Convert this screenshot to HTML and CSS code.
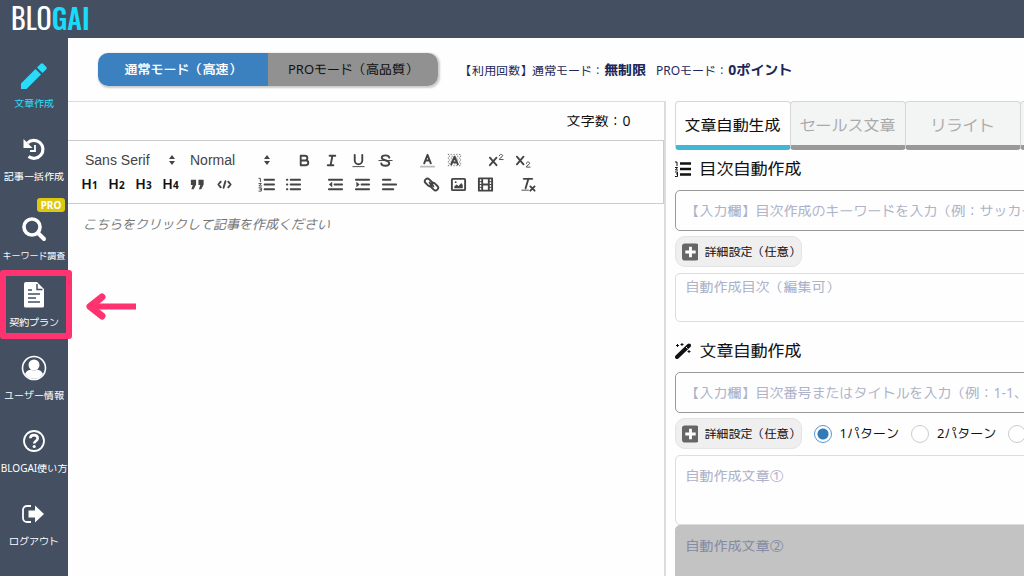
FILE: index.html
```html
<!DOCTYPE html>
<html lang="ja">
<head>
<meta charset="utf-8">
<title>BLOGAI</title>
<link rel="stylesheet" href="styles.css">
</head>
<body>
<header class="topbar"><a class="logo" href="#">BLO<span class="logo-accent">GAI</span></a></header>
<div class="shell">
  <nav class="sidebar">
    <a class="nav-item active" href="#">
      <svg class="nav-icon" viewBox="0 0 28 28" fill="currentColor"><path d="M1 21.500V27h5.500L21 12.500 15.500 7zM17 5.500l5.500 5.500 3.800-3.800a1.600 1.600 0 0 0 0-2.200L23 1.700a1.600 1.600 0 0 0-2.200 0z"/></svg>
      <span>文章作成</span>
    </a>
    <a class="nav-item" href="#">
      <svg class="nav-icon" viewBox="0 0 28 28" fill="none" stroke="currentColor"><path d="M7.500 8a9 9 0 1 1 1 13.500" stroke-width="3.200"/><path d="M3.500 4v9h9z" fill="currentColor" stroke="none"/><path d="M15 10v6h-5" stroke-width="1.800"/></svg>
      <span>記事一括作成</span>
    </a>
    <a class="nav-item has-badge" href="#">
      <span class="badge">PRO</span>
      <svg class="nav-icon" viewBox="0 0 28 28" fill="none" stroke="currentColor"><circle cx="12" cy="12" r="8" stroke-width="3.600"/><path d="M18 18l6 6" stroke-width="4" stroke-linecap="round"/></svg>
      <span class="long">キーワード調査</span>
    </a>
    <a class="nav-item marked" href="#">
      <svg class="nav-icon" viewBox="0 0 28 28"><path d="M6 1h11l7 7v17a1.500 1.500 0 0 1-1.500 1.500h-17A1.500 1.500 0 0 1 4 25V3a2 2 0 0 1 2-2z" fill="currentColor"/><path d="M17 3v5.500h5.500M8 9h4M8 13h12M8 17h8M8 21h12" fill="none" stroke="#445062" stroke-width="1.500"/></svg>
      <span>契約プラン</span>
      <span class="highlight"></span>
      <svg class="arrow" viewBox="0 0 52 30" fill="none" stroke="#ff3370" stroke-width="6"><path d="M5 14.500h46"/><path d="M17 5L5 14.500l12 9.500" stroke-width="7" stroke-linecap="round" stroke-linejoin="round"/></svg>
    </a>
    <a class="nav-item" href="#">
      <svg class="nav-icon" viewBox="0 0 28 28"><circle cx="14" cy="14" r="11.500" fill="none" stroke="currentColor" stroke-width="1.600"/><circle cx="14" cy="11" r="5.500" fill="currentColor"/><path d="M5 20c1.500-3.500 4-4.500 6-4.300 2 1 4 1 6 0 2-.2 4.500.8 6 4.300a11 11 0 0 1-18 0z" fill="currentColor"/></svg>
      <span>ユーザー情報</span>
    </a>
    <a class="nav-item" href="#">
      <svg class="nav-icon" viewBox="0 0 28 28" fill="none" stroke="currentColor"><circle cx="14" cy="14" r="10" stroke-width="1.800"/><path d="M10.300 11.300c.2-4.300 7.400-4.300 7.400 0 0 2.700-3.500 2.600-3.500 5.200" stroke-width="2.600"/><circle cx="14.200" cy="19.500" r="1.600" fill="currentColor" stroke="none"/></svg>
      <span>BLOGAI使い方</span>
    </a>
    <a class="nav-item" href="#">
      <svg class="nav-icon" viewBox="0 0 28 28"><path d="M11 6H7a4 4 0 0 0-4 4v8a4 4 0 0 0 4 4h4" fill="none" stroke="currentColor" stroke-width="1.800"/><path d="M8.500 10.500H15V5.500L24 14l-9 8.500v-5H8.500z" fill="currentColor"/></svg>
      <span>ログアウト</span>
    </a>
  </nav>
  <main class="main">
    <div class="mode-row">
      <div class="mode-toggle">
        <button class="mode on" type="button">通常モード（高速）</button>
        <button class="mode" type="button">PROモード（高品質）</button>
      </div>
      <p class="usage"><span>【利用回数】通常モード：<b>無制限</b></span><span>PROモード：<b>0ポイント</b></span></p>
    </div>
    <div class="columns">
      <section class="editor">
        <div class="count">文字数：<span>0</span></div>
        <div class="toolbar">
          <div class="tool-row">
            <div class="group">
              <div class="picker wide"><select aria-label="フォント"><option>Sans Serif</option></select><svg viewBox="0 0 8 12"><path d="M4 1l3 4H1zM4 11L1 7h6z"/></svg></div>
              <div class="picker"><select aria-label="サイズ"><option>Normal</option></select><svg viewBox="0 0 8 12"><path d="M4 1l3 4H1zM4 11L1 7h6z"/></svg></div>
            </div>
            <div class="group">
              <button type="button" aria-label="太字"><svg viewBox="0 0 18 18"><path d="M5 4h4.500a2.500 2.500 0 0 1 0 5H5zM5 9h5.500a2.500 2.500 0 0 1 0 5H5z"/></svg></button>
              <button type="button" aria-label="斜体"><svg viewBox="0 0 18 18"><path d="M7 4h6M5 14h6M8 14l2-10"/></svg></button>
              <button type="button" aria-label="下線"><svg viewBox="0 0 18 18"><path d="M5 3v6a4 4 0 0 0 8 0V3"/><path class="thin" d="M3 15.500h12"/></svg></button>
              <button type="button" aria-label="取り消し線"><svg viewBox="0 0 18 18"><path d="M13 6c0-3-8-3.500-8 0 0 3.500 8 2 8 6 0 3.500-8 3.500-8.500 0"/><path class="thin" d="M2 9h14"/></svg></button>
            </div>
            <div class="group">
              <button type="button" aria-label="文字色"><svg viewBox="0 0 18 18"><path d="M5.500 12L9 3l3.500 9M7 9h4"/><path class="pale" d="M2 15.500h14"/></svg></button>
              <button type="button" aria-label="背景色"><svg viewBox="0 0 18 18"><path class="dots" d="M2 2.500h14M3 4.500h14M2 6.500h14M3 8.500h14M2 10.500h14M3 12.500h14M2 14.500h14"/><path d="M5.500 13L9 5l3.500 8M7 11h4"/></svg></button>
            </div>
            <div class="group">
              <button type="button" aria-label="上付き"><svg viewBox="0 0 18 18"><path d="M2 6l7 8M9 6l-7 8"/><path class="thin" d="M12 4c0-2 3.500-2 3.500 0 0 1.500-3.500 2-3.500 4h4"/></svg></button>
              <button type="button" aria-label="下付き"><svg viewBox="0 0 18 18"><path d="M2 5l7 8M9 5l-7 8"/><path class="thin" d="M12 12c0-2 3.500-2 3.500 0 0 1.500-3.500 2-3.500 4h4"/></svg></button>
            </div>
          </div>
          <div class="tool-row">
            <div class="group">
              <button class="head" type="button">H<small>1</small></button>
              <button class="head" type="button">H<small>2</small></button>
              <button class="head" type="button">H<small>3</small></button>
              <button class="head" type="button">H<small>4</small></button>
              <button type="button" aria-label="引用"><svg viewBox="0 0 18 18"><path class="solid" d="M2 4h5.500v5L5 14H2.500L4 9.500H2zM10 4h5.500v5L13 14h-2.500L12 9.500h-2z"/></svg></button>
              <button type="button" aria-label="コード"><svg viewBox="0 0 18 18"><path d="M5 6L2.500 9 5 12M13 6l2.500 3-2.500 3M10 5.500l-2 7"/></svg></button>
            </div>
            <div class="group">
              <button type="button" aria-label="番号付きリスト"><svg viewBox="0 0 18 18"><path d="M7 4h10M7 9h10M7 14h10"/><path class="thin" d="M1 2.500h1.500V6M1 8h2.500L1 10.500h3M1 12.500h2.500v3.500H1M2 14h1.500"/></svg></button>
              <button type="button" aria-label="箇条書き"><svg viewBox="0 0 18 18"><path d="M6 4h10M6 9h10M6 14h10M2 4h.5M2 9h.5M2 14h.5"/></svg></button>
            </div>
            <div class="group">
              <button type="button" aria-label="字下げ解除"><svg viewBox="0 0 18 18"><path d="M2 4h14M8 9h8M2 14h14"/><path class="solid" d="M5.500 6v6L2 9z"/></svg></button>
              <button type="button" aria-label="字下げ"><svg viewBox="0 0 18 18"><path d="M2 4h14M8 9h8M2 14h14"/><path class="solid" d="M2.500 6v6L6 9z"/></svg></button>
              <button type="button" aria-label="配置"><svg viewBox="0 0 18 18"><path d="M2 4h8M2 9h14M2 14h11"/></svg></button>
            </div>
            <div class="group">
              <button type="button" aria-label="リンク"><svg viewBox="0 0 18 18"><rect x="1.500" y="4" width="9" height="5.500" rx="2.700" transform="rotate(45 6 6.700)"/><rect x="7.500" y="8.500" width="9" height="5.500" rx="2.700" transform="rotate(45 12 11.300)"/><path d="M7 7l4 4"/></svg></button>
              <button type="button" aria-label="画像"><svg viewBox="0 0 18 18"><rect x="2" y="3" width="14" height="12" rx="1"/><path class="solid" d="M4.500 13v-2l2.500-2 2 1.500L12 7.500l1.500 2V13z"/><circle class="solid" cx="6" cy="6.500" r="1"/></svg></button>
              <button type="button" aria-label="動画"><svg viewBox="0 0 18 18"><rect x="2" y="2.500" width="14" height="13"/><path d="M5.500 3v12M12.500 3v12M6 9h6"/><path class="thin" d="M2 6h3M2 9h3M2 12h3M13 6h3M13 9h3M13 12h3"/></svg></button>
            </div>
            <div class="group">
              <button type="button" aria-label="書式解除"><svg viewBox="0 0 18 18"><path d="M5 3h9M7 13l3-10M12 11l4.500 4.500M16.500 11L12 15.500"/><path class="thin" d="M3 15h7"/></svg></button>
            </div>
          </div>
        </div>
        <textarea class="body-text" aria-label="記事" placeholder="こちらをクリックして記事を作成ください"></textarea>
      </section>
      <section class="panel">
        <div class="tabs">
          <button class="tab current" type="button">文章自動生成</button>
          <button class="tab" type="button">セールス文章</button>
          <button class="tab" type="button">リライト</button>
          <button class="tab" type="button" aria-label="その他"></button>
        </div>
        <h2 class="section-title"><svg viewBox="0 0 16 16"><path d="M5 2.500h11M5 8h11M5 13.500h11" stroke="#111" stroke-width="2.500"/><path d="M0 1h2v4M0 6.500h2.500L.5 9h2.500M0 11h2.500v4.500H0M1 13h1.500" fill="none" stroke="#111"/></svg>目次自動作成</h2>
        <input class="field" type="text" aria-label="目次作成のキーワード" placeholder="【入力欄】目次作成のキーワードを入力（例：サッカー">
        <div class="options">
          <button class="detail" type="button"><svg viewBox="0 0 18 18"><rect width="18" height="18" rx="3" fill="#666"/><path d="M9 3.500v11M3.500 9h11" stroke="#fff" stroke-width="3"/></svg>詳細設定（任意）</button>
        </div>
        <textarea class="field area outline" aria-label="自動作成目次" placeholder="自動作成目次（編集可）"></textarea>
        <h2 class="section-title second"><svg viewBox="0 0 16 16"><path d="M2 14L14 2.500" stroke="#111" stroke-width="4" stroke-linecap="round"/><path d="M11 4l1.500 1.500" stroke="#fff"/><path d="M2.500 1v3M1 2.500h3M7 0v3M5.500 1.500h3M14 7v3M12.500 8.500h3" stroke="#111" stroke-width="1"/></svg>文章自動作成</h2>
        <input class="field" type="text" aria-label="目次番号またはタイトル" placeholder="【入力欄】目次番号またはタイトルを入力（例：1-1、サッカー">
        <div class="options">
          <button class="detail" type="button"><svg viewBox="0 0 18 18"><rect width="18" height="18" rx="3" fill="#666"/><path d="M9 3.500v11M3.500 9h11" stroke="#fff" stroke-width="3"/></svg>詳細設定（任意）</button>
          <label class="choice"><input type="radio" name="pattern" checked>1パターン</label>
          <label class="choice"><input type="radio" name="pattern">2パターン</label>
          <label class="choice"><input type="radio" name="pattern" aria-label="3パターン"></label>
        </div>
        <textarea class="field area result" aria-label="自動作成文章①" placeholder="自動作成文章①"></textarea>
        <textarea class="field area result off" aria-label="自動作成文章②" placeholder="自動作成文章②" disabled></textarea>
      </section>
    </div>
  </main>
</div>
</body>
</html>
```
FILE: styles.css
```css
* { box-sizing: border-box; }
body {
  margin: 0;
  height: 100vh;
  display: flex;
  flex-direction: column;
  overflow: hidden;
  background: #fefefe;
  color: #111;
  font-family: "Noto Sans", "M PLUS Rounded 1c", "M PLUS 1p", "Noto Sans CJK JP", sans-serif;
  font-size: 14px;
}
button, input, textarea, select { font: inherit; color: inherit; margin: 0; }
button { padding: 0; border: 0; background: none; white-space: nowrap; }
a { color: inherit; text-decoration: none; }

.topbar { flex: none; height: 38px; padding-left: 11px; background: #445062; }
.logo {
  color: #fff;
  font-family: Oswald, Roboto, sans-serif;
  font-size: 28px;
  line-height: 35px;
}
.logo-accent { color: #19dcfa; font-weight: 500; }

.shell { flex: 1; display: flex; min-height: 0; }
.sidebar { flex: none; width: 68px; background: #445062; color: #fff; }
.nav-item {
  position: relative;
  display: flex;
  flex-direction: column;
  align-items: center;
  gap: 5px;
  padding-top: 24px;
  font-size: 10px;
  line-height: 16px;
  white-space: nowrap;
}
.nav-item.active { color: #2bdcfa; }
.nav-item .long { font-size: 9px; }
.nav-icon { width: 28px; height: 28px; }
.has-badge { padding-top: 31px; }
.marked { padding-top: 17px; }
.badge {
  position: absolute;
  top: 14px;
  right: 3px;
  width: 28px;
  border-radius: 3px;
  background: #dcc80f;
  font-size: 10px;
  font-weight: bold;
  line-height: 14px;
  text-align: center;
}
.highlight {
  position: absolute;
  z-index: 2;
  top: 6px;
  left: 0;
  width: 72px;
  height: 69px;
  border: 6px solid #ff3370;
  border-radius: 3px;
}
.arrow { position: absolute; z-index: 2; top: 28px; left: 85px; width: 52px; height: 30px; }

.main { flex: 1; min-width: 0; display: flex; flex-direction: column; }
.mode-row { flex: none; display: flex; align-items: center; gap: 22px; height: 63px; padding-left: 30px; }
.mode-toggle { display: flex; border-radius: 10px; overflow: hidden; box-shadow: 1px 1px 2px 1px #ccc; }
.mode { width: 170px; height: 33px; background: #919191; font-size: 13px; }
.mode.on { background: #3b81c0; color: #fff; font-weight: 500; }
.usage { display: flex; gap: 10px; margin: 0; color: #1d2859; font-size: 12px; white-space: nowrap; }
.usage b { font-size: 14px; }

.columns { flex: 1; min-height: 0; display: grid; grid-template-columns: minmax(0, 5fr) minmax(0, 3fr); }
.editor { display: flex; flex-direction: column; border: solid #dcdcdc; border-width: 1px 2px 0 0; }
.count { padding: 8px 33px 8px 0; height: 38px; line-height: 22px; text-align: right; }
.toolbar { border: 1px solid #ccc; border-left: 0; padding: 7px 8px; height: 64px; }
.tool-row { display: flex; gap: 15px; height: 24px; }
.group { display: flex; align-items: center; }
.group button { width: 27px; height: 24px; display: flex; align-items: center; justify-content: center; }
.group button svg {
  width: 17px;
  height: 17px;
  fill: none;
  stroke: #444;
  stroke-width: 2;
  stroke-linecap: round;
  stroke-linejoin: round;
}
.group .thin { stroke-width: 1; }
.group .pale { stroke: #bbb; }
.group .dots { stroke-width: 1; stroke-dasharray: 1 2; stroke-linecap: butt; }
.group .solid { fill: #444; stroke: none; }
.group .head { align-items: baseline; color: #111; font-size: 14px; font-weight: 600; line-height: 24px; }
.head small { font-size: 10px; font-weight: bold; }
.picker { display: flex; align-items: center; width: 95px; padding: 0 5px 0 9px; }
.picker.wide { width: 105px; }
.picker select {
  flex: 1;
  min-width: 0;
  padding: 0;
  border: 0;
  appearance: none;
  background: none;
  color: #444;
  font-family: "Liberation Sans", sans-serif;
}
.picker svg { width: 8px; height: 12px; fill: #444; }
.body-text { flex: 1; border: 0; padding: 10px 15px; resize: none; background: none; font-size: 13px; line-height: 20px; }
.body-text::placeholder { color: #777; font-style: italic; }

.panel { padding-left: 9px; overflow: hidden; }
.tabs { display: flex; }
.tab {
  flex: none;
  width: 116px;
  height: 49px;
  padding-top: 4px;
  margin-right: -1px;
  border: 1px solid #d6d6d6;
  border-bottom: 5px solid #999;
  border-radius: 4px;
  background: #f3f4f4;
  color: #aaa;
  font-size: 16px;
}
.tab.current { border-bottom-color: #43b6d6; background: #fefefe; color: #111; }
.section-title {
  display: flex;
  align-items: center;
  gap: 9px;
  margin: 7px 0 9px;
  font-size: 17px;
  font-weight: 400;
  line-height: 24px;
}
.section-title.second { margin-top: 17px; }
.section-title svg { width: 16px; height: 16px; }
.field {
  display: block;
  width: calc(100% + 24px);
  height: 41px;
  padding: 0 10px;
  border: 1px solid #999;
  border-radius: 5px;
  background: #fefefe;
}
.field::placeholder { color: #adb2c8; opacity: 1; }
.options { display: flex; align-items: center; gap: 12px; margin: 5px 0 6px; }
.detail {
  flex: none;
  display: flex;
  align-items: center;
  gap: 6px;
  width: 127px;
  height: 31px;
  padding-left: 6px;
  border: 1px solid #e4e4e4;
  border-radius: 10px;
  background: #efefef;
  font-size: 12px;
}
.detail svg { width: 18px; height: 18px; }
.choice { flex: none; display: flex; align-items: center; gap: 8px; font-size: 13px; }
.choice input {
  appearance: none;
  width: 18px;
  height: 18px;
  border: 1px solid #ccc;
  border-radius: 50%;
  background: #fff;
}
.choice input:checked { border-color: #5b97d0; background: radial-gradient(circle, #337ab7 5px, #fff 6px); }
.area { resize: none; border-color: #ddd; line-height: 20px; }
.outline { height: 49px; padding-top: 3px; }
.result { height: 70px; padding-top: 10px; }
.off { border-color: #c3c3c3; background: #c3c3c3; }
.off::placeholder { color: #858ba3; }
```
